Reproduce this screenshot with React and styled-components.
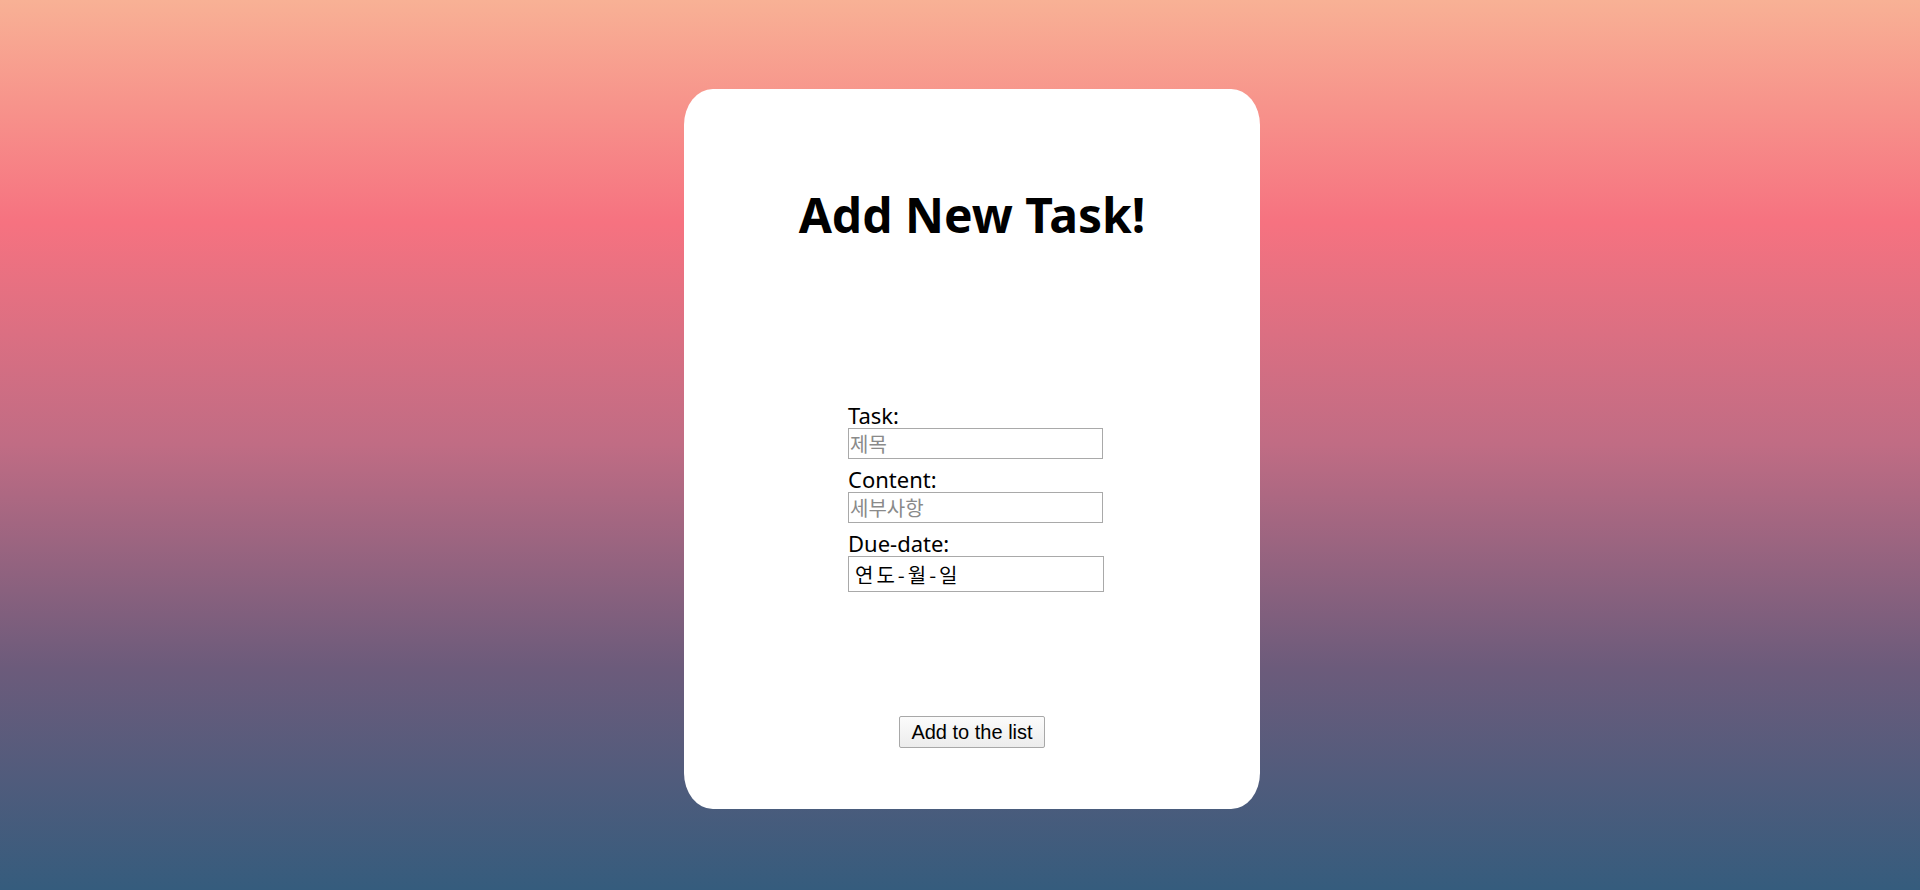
import styled, { createGlobalStyle } from "styled-components";

const GlobalStyle = createGlobalStyle`
  html, body {
    margin: 0;
    padding: 0;
  }
  body {
    font-family: "Noto Sans", "Noto Sans CJK KR", sans-serif;
  }
`;

const App = () => {
  return (
    <Page>
      <GlobalStyle />
      <Card>
        <Title>Add New Task!</Title>
        <Form>
          <Label htmlFor="task">Task:</Label>
          <TextInput id="task" type="text" placeholder="제목" />
          <Label htmlFor="content">Content:</Label>
          <TextInput id="content" type="text" placeholder="세부사항" />
          <Label htmlFor="due">Due-date:</Label>
          <DateInput id="due" type="text" placeholder="연도-월-일" />
        </Form>
        <AddButton type="button">Add to the list</AddButton>
      </Card>
    </Page>
  );
};
export default App;

//==============================styled-components

const Page = styled.div`
  box-sizing: border-box;
  width: 100%;
  height: 100vh;
  padding: 10vh 0 0 24px;
  display: flex;
  justify-content: center;
  align-items: flex-start;
  background: linear-gradient(
    180deg,
    #f8b195 0%,
    #f67280 25%,
    #c06c84 50%,
    #6c5b7b 75%,
    #355c7d 100%
  );
`;

const Card = styled.div`
  box-sizing: border-box;
  width: 576px;
  height: 720px;
  background-color: white;
  border-radius: 5%;
  display: flex;
  flex-direction: column;
  align-items: center;
  padding-top: 94px;
`;

const Title = styled.h1`
  margin: 0;
  font-size: 48px;
  line-height: 64px;
  font-weight: 700;
  color: #000;
`;

const Form = styled.div`
  display: flex;
  flex-direction: column;
  align-items: flex-start;
  width: 256px;
  margin: 156px 0 0 8px;
`;

const Label = styled.label`
  font-size: 22px;
  line-height: 25px;
  color: #000;
  margin-top: 8px;

  &:first-child {
    margin-top: 0;
  }
`;

const TextInput = styled.input`
  box-sizing: border-box;
  width: 255px;
  height: 31px;
  margin: 0;
  padding: 0 1px;
  border: 1px solid #a9a9a9;
  font-family: "Noto Sans CJK KR", sans-serif;
  font-size: 20px;
  color: #000;
  outline: none;

  &::placeholder {
    color: #8a8a8a;
  }
`;

const DateInput = styled(TextInput)`
  width: 256px;
  height: 36px;
  padding: 0 6px;
  letter-spacing: 3px;

  &::placeholder {
    color: #000;
  }
`;

const AddButton = styled.button`
  box-sizing: border-box;
  margin-top: 124px;
  width: 146px;
  height: 32px;
  padding: 0;
  font-family: "Liberation Sans", Arial, sans-serif;
  font-size: 20px;
  color: #000;
  background: linear-gradient(180deg, #fbfbfb, #ececec);
  border: 1px solid #a8a8a8;
  border-radius: 2px;
  cursor: pointer;
`;
